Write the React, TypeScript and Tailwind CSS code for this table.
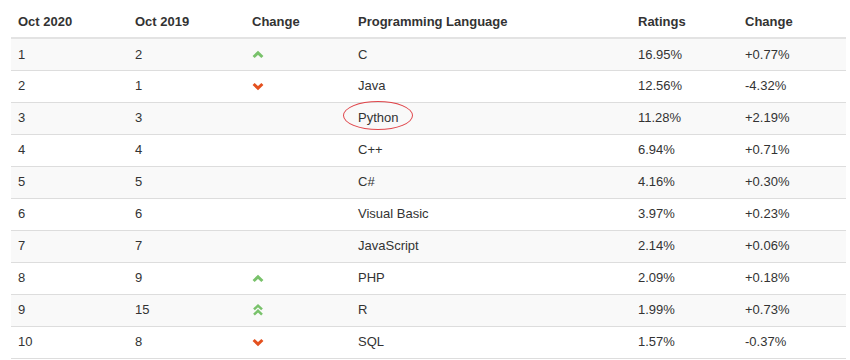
type Trend = "up" | "down" | "up2" | null;

interface Row {
  now: number;
  prev: number;
  trend: Trend;
  lang: string;
  rating: string;
  change: string;
}

const rows: Row[] = [
  { now: 1, prev: 2, trend: "up", lang: "C", rating: "16.95%", change: "+0.77%" },
  { now: 2, prev: 1, trend: "down", lang: "Java", rating: "12.56%", change: "-4.32%" },
  { now: 3, prev: 3, trend: null, lang: "Python", rating: "11.28%", change: "+2.19%" },
  { now: 4, prev: 4, trend: null, lang: "C++", rating: "6.94%", change: "+0.71%" },
  { now: 5, prev: 5, trend: null, lang: "C#", rating: "4.16%", change: "+0.30%" },
  { now: 6, prev: 6, trend: null, lang: "Visual Basic", rating: "3.97%", change: "+0.23%" },
  { now: 7, prev: 7, trend: null, lang: "JavaScript", rating: "2.14%", change: "+0.06%" },
  { now: 8, prev: 9, trend: "up", lang: "PHP", rating: "2.09%", change: "+0.18%" },
  { now: 9, prev: 15, trend: "up2", lang: "R", rating: "1.99%", change: "+0.73%" },
  { now: 10, prev: 8, trend: "down", lang: "SQL", rating: "1.57%", change: "-0.37%" },
];

function TrendIcon({ trend }: { trend: Trend }) {
  if (!trend) return null;
  if (trend === "down") {
    return (
      <svg width="12" height="9" viewBox="0 0 12 9" className="block">
        <polyline points="1.6,2 6,6.2 10.4,2" fill="none" stroke="#e4511f" strokeWidth="3" />
      </svg>
    );
  }
  if (trend === "up2") {
    return (
      <svg width="12" height="14" viewBox="0 0 12 14" className="block">
        <polyline points="2,6.4 6,2.6 10,6.4" fill="none" stroke="#79c26b" strokeWidth="2.5" />
        <polyline points="2,11.6 6,7.8 10,11.6" fill="none" stroke="#79c26b" strokeWidth="2.5" />
      </svg>
    );
  }
  return (
    <svg width="12" height="9" viewBox="0 0 12 9" className="block">
      <polyline points="1.6,7 6,2.8 10.4,7" fill="none" stroke="#79c26b" strokeWidth="3" />
    </svg>
  );
}

export default function App() {
  return (
    <div className="w-[850px] h-[360px] bg-white pl-[11px] pr-[4px] font-['Liberation_Sans',Arial,sans-serif] text-[13px] text-[#333]">
      <table className="w-[835px] table-fixed border-collapse">
        <colgroup>
          <col className="w-[117px]" />
          <col className="w-[117px]" />
          <col className="w-[106px]" />
          <col className="w-[280px]" />
          <col className="w-[107px]" />
          <col className="w-[108px]" />
        </colgroup>
        <thead>
          <tr className="h-[38px] border-b-2 border-[#e3e3e3]">
            {["Oct 2020", "Oct 2019", "Change", "Programming Language", "Ratings", "Change"].map((h, i) => (
              <th key={i} className="px-[7px] pt-[7px] text-left align-middle font-bold">
                {h}
              </th>
            ))}
          </tr>
        </thead>
        <tbody>
          {rows.map((r, i) => (
            <tr
              key={r.now}
              className={`h-[32px] border-b border-[#ddd] ${i % 2 === 0 ? "bg-[#f9f9f9]" : "bg-white"}`}
            >
              <td className="px-[7px] align-middle">{r.now}</td>
              <td className="px-[7px] align-middle">{r.prev}</td>
              <td className="px-[7px] align-middle">
                <TrendIcon trend={r.trend} />
              </td>
              <td className="px-[7px] align-middle">
                {r.lang === "Python" ? (
                  <span className="relative">
                    {r.lang}
                    <span className="absolute left-[-15px] top-[-9px] h-[29px] w-[70px] rounded-[50%] border border-[#e0474c]" />
                  </span>
                ) : (
                  r.lang
                )}
              </td>
              <td className="px-[7px] align-middle">{r.rating}</td>
              <td className="px-[7px] align-middle">{r.change}</td>
            </tr>
          ))}
        </tbody>
      </table>
    </div>
  );
}
